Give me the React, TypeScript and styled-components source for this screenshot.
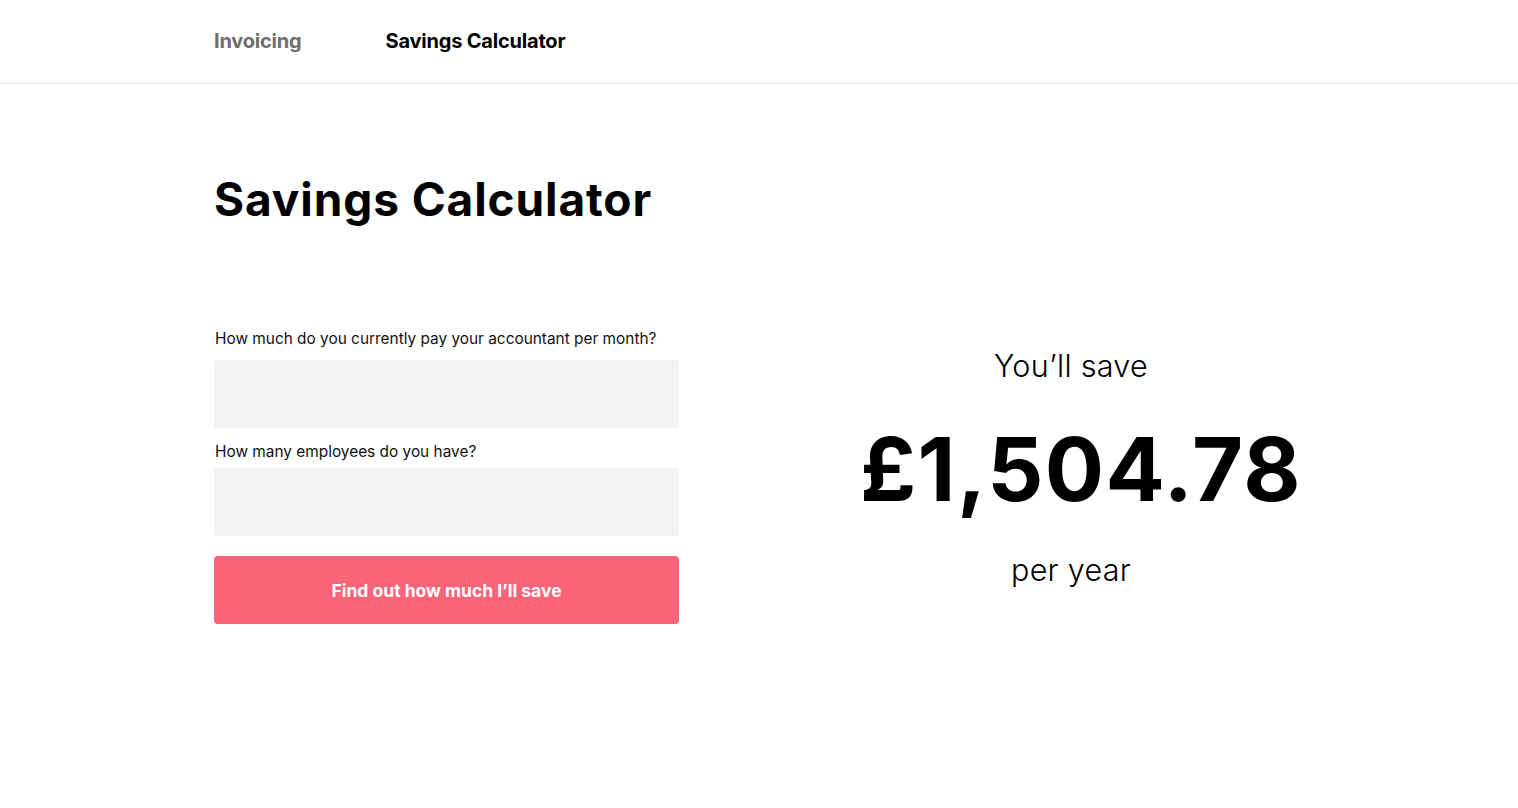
import React from "react";
import styled, { createGlobalStyle } from "styled-components";

const Global = createGlobalStyle`
  html, body { margin: 0; padding: 0; background: #fff; }
  body { font-family: Inter, "Liberation Sans", sans-serif; color: #000; }
  * { box-sizing: border-box; }
`;

const Header = styled.header`
  height: 84px;
  border-bottom: 1px solid #e3e3e3;
  display: flex;
  align-items: center;
  padding-left: 214px;
  gap: 84px;
`;

const NavLink = styled.a<{ $active?: boolean }>`
  font-size: 20px;
  font-weight: 700;
  color: ${(p) => (p.$active ? "#000" : "#6e6e6e")};
  text-decoration: none;
  letter-spacing: -0.2px;
  padding-bottom: 2px;
`;

const Main = styled.main`
  padding: 85px 0 0 214px;
`;

const Title = styled.h1`
  margin: 0;
  font-size: 46px;
  font-weight: 700;
  letter-spacing: 0.9px;
  line-height: 60px;
`;

const Grid = styled.div`
  display: grid;
  grid-template-columns: 465px 600px;
  column-gap: 92px;
  margin-top: 99px;
`;

const Form = styled.form`
  display: flex;
  flex-direction: column;
`;

const Label = styled.label<{ $gap: number }>`
  font-size: 15.4px;
  font-weight: 400;
  color: #111;
  line-height: 20px;
  padding-top: 1px;
  margin-bottom: ${(p) => p.$gap}px;
  padding-left: 1px;
`;

const Input = styled.input<{ $gap: number }>`
  height: 68px;
  border: none;
  border-radius: 4px;
  background: #f3f3f5;
  margin-bottom: ${(p) => p.$gap}px;
  padding: 0 16px;
  font-size: 18px;
  font-family: inherit;
  outline: none;
`;

const Button = styled.button`
  height: 68px;
  border: none;
  border-radius: 4px;
  background: #fa6478;
  color: #fff;
  font-family: inherit;
  font-size: 17.5px;
  font-weight: 700;
  cursor: pointer;
`;

const Result = styled.div`
  display: flex;
  flex-direction: column;
  align-items: center;
  padding-top: 20px;
`;

const Caption = styled.div`
  font-size: 30.5px;
  font-weight: 300;
  line-height: 36px;
  letter-spacing: 0.3px;
`;

const Amount = styled.div`
  font-size: 88px;
  font-weight: 700;
  line-height: 100px;
  margin: 35px 0 33px 20px;
  letter-spacing: 1.4px;
`;

export default function App() {
  return (
    <>
      <Global />
      <Header>
        <NavLink href="#">Invoicing</NavLink>
        <NavLink href="#" $active>
          Savings Calculator
        </NavLink>
      </Header>
      <Main>
        <Title>Savings Calculator</Title>
        <Grid>
          <Form onSubmit={(e) => e.preventDefault()}>
            <Label htmlFor="fee" $gap={11}>
              How much do you currently pay your accountant per month?
            </Label>
            <Input id="fee" $gap={13} />
            <Label htmlFor="emp" $gap={6}>
              How many employees do you have?
            </Label>
            <Input id="emp" $gap={20} />
            <Button type="submit">Find out how much I’ll save</Button>
          </Form>
          <Result>
            <Caption>You’ll save</Caption>
            <Amount>£1,504.78</Amount>
            <Caption>per year</Caption>
          </Result>
        </Grid>
      </Main>
    </>
  );
}
